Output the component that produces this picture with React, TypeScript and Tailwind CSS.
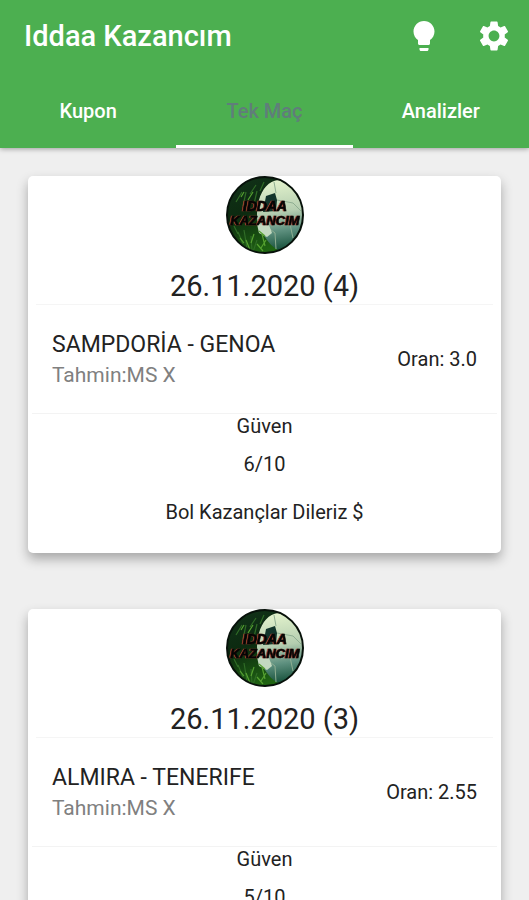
import { useState } from "react";
import { MdSettings } from "react-icons/md";

type Tip = {
  title: string;
  match: string;
  pick: string;
  odds: string;
  trust: string;
};

const tips: Tip[] = [
  { title: "26.11.2020 (4)", match: "SAMPDORİA - GENOA", pick: "Tahmin:MS X", odds: "Oran: 3.0", trust: "6/10" },
  { title: "26.11.2020 (3)", match: "ALMIRA - TENERIFE", pick: "Tahmin:MS X", odds: "Oran: 2.55", trust: "5/10" },
];

const tabs = ["Kupon", "Tek Maç", "Analizler"];

function BulbIcon() {
  return (
    <svg viewBox="0 0 24 24" className="size-9 fill-current" aria-hidden="true">
      <path d="M9 21c0 .55.45 1 1 1h4c.55 0 1-.45 1-1v-1H9v1zm3-19C8.14 2 5 5.14 5 9c0 2.38 1.19 4.47 3 5.74V17c0 .55.45 1 1 1h6c.55 0 1-.45 1-1v-2.26c1.81-1.27 3-3.36 3-5.74 0-3.86-3.14-7-7-7z" />
    </svg>
  );
}

function Logo({ id }: { id: string }) {
  const clip = `${id}-clip`;
  const grass = `${id}-grass`;
  const ball = `${id}-ball`;
  return (
    <svg viewBox="0 0 78 78" className="size-[78px]" role="img" aria-label="Iddaa Kazancım">
      <defs>
        <clipPath id={clip}>
          <circle cx="39" cy="39" r="38" />
        </clipPath>
        <linearGradient id={grass} x1="0" y1="0" x2="0.4" y2="1">
          <stop offset="0" stopColor="#12331a" />
          <stop offset="0.5" stopColor="#0c2a10" />
          <stop offset="1" stopColor="#1f6412" />
        </linearGradient>
        <linearGradient id={ball} x1="0.5" y1="0" x2="0.6" y2="1">
          <stop offset="0" stopColor="#e2f2cc" />
          <stop offset="0.45" stopColor="#b4cdb0" />
          <stop offset="0.7" stopColor="#5f9180" />
          <stop offset="1" stopColor="#0f4a34" />
        </linearGradient>
      </defs>
      <g clipPath={`url(#${clip})`}>
        <rect width="78" height="78" fill={`url(#${grass})`} />
        <g fill="none" stroke="#2f6b26" strokeWidth="1.2">
          <path d="M10 26l6-10M17 30l3-14M24 18l6-9M28 28l3-13M12 56l5 12M18 54l3 18M25 60l1 15M31 64l-4 12M8 50l4 8M34 15l4-9" />
        </g>
        <path
          d="M33 24C36 13 43 5 52 4c12 0 26 14 27 33 1 20-8 34-20 38-8 1-15-6-20-14-6-6-8-13-8-20 0-6 0-11 2-17z"
          fill={`url(#${ball})`}
        />
        <path d="M40 20l9-3 2 7-1 11-13 1 3-16z" fill="#12352b" />
        <path d="M50 17l-2-11M51 24l16 3 8 8M40 50l9 7 1 16M64 48l3 14" fill="none" stroke="#8fae92" strokeWidth="1" />
        <path d="M31 48l12 1 3 8-5 4-8-4z" fill="#c3d9c0" />
        <g fill="none" stroke="#55a030" strokeWidth="1.2">
          <path d="M20 64l4 10M28 58l-3 9M14 62l4 5M31 68l6 7M22 24l5-8M15 21l3-5M36 58l3 12M40 64l-5 8M33 55l6 5" />
        </g>
        <g
          className="[filter:drop-shadow(-1px_0_0_#a8402e)]"
          fontFamily="'Liberation Sans', Arial, sans-serif"
          fontWeight="700"
          fontStyle="italic"
          textAnchor="middle"
          fill="#050505"
          stroke="#050505"
          strokeWidth="0.6"
        >
          <text x="39" y="35" fontSize="14">IDDAA</text>
          <text x="39" y="49" fontSize="13">KAZANCIM</text>
        </g>
      </g>
      <circle cx="39" cy="39" r="38" fill="none" stroke="#07110a" strokeWidth="2" />
    </svg>
  );
}

function TipCard({ tip, id }: { tip: Tip; id: string }) {
  return (
    <article className="flex flex-col rounded-[5px] bg-white pb-[29px] text-center text-xl leading-6 text-[#222] shadow-[0_6px_12px_rgba(0,0,0,0.3)]">
      <div className="flex justify-center">
        <Logo id={id} />
      </div>
      <h2 className="mx-2 border-b border-[#f5f5f5] pt-3.5 text-[29px] leading-9">{tip.title}</h2>
      <div className="mx-1 flex h-[109px] items-center justify-between border-b border-[#f3f3f3] px-5">
        <div className="text-left">
          <h3 className="text-[23px] leading-8">{tip.match}</h3>
          <p className="text-[21px] leading-7 text-[#808080]">{tip.pick}</p>
        </div>
        <p>{tip.odds}</p>
      </div>
      <p>Güven</p>
      <p className="pt-3.5">{tip.trust}</p>
      <p className="pt-6">Bol Kazançlar Dileriz $</p>
    </article>
  );
}

export default function App() {
  const [active, setActive] = useState(1);
  return (
    <div className="flex h-screen flex-col bg-[#efefef] font-['Roboto',sans-serif]">
      <header className="z-10 bg-[#4caf50] text-white shadow-[0_1px_5px_rgba(0,0,0,0.35)]">
        <div className="flex h-[72px] items-center gap-[34px] pr-[17px] pl-6">
          <h1 className="flex-1 text-[29px] leading-9 font-medium">Iddaa Kazancım</h1>
          <button type="button" aria-label="İpuçları">
            <BulbIcon />
          </button>
          <button type="button" aria-label="Ayarlar">
            <MdSettings className="size-9" />
          </button>
        </div>
        <div role="tablist" className="grid grid-cols-3">
          {tabs.map((tab, i) => (
            <button
              key={tab}
              type="button"
              role="tab"
              aria-selected={i === active}
              onClick={() => setActive(i)}
              className={
                i === active
                  ? "h-[76px] border-b-3 border-white pt-1 text-xl font-medium text-[#607d7b]"
                  : "h-[76px] border-b-3 border-transparent pt-1 text-xl font-medium text-white"
              }
            >
              {tab}
            </button>
          ))}
        </div>
      </header>
      <main className="flex min-h-0 flex-1 flex-col gap-14 overflow-y-auto px-7 pt-7 pb-7 [scrollbar-width:none]">
        {tips.map((tip, i) => (
          <TipCard key={tip.title} tip={tip} id={`logo-${i}`} />
        ))}
      </main>
    </div>
  );
}
